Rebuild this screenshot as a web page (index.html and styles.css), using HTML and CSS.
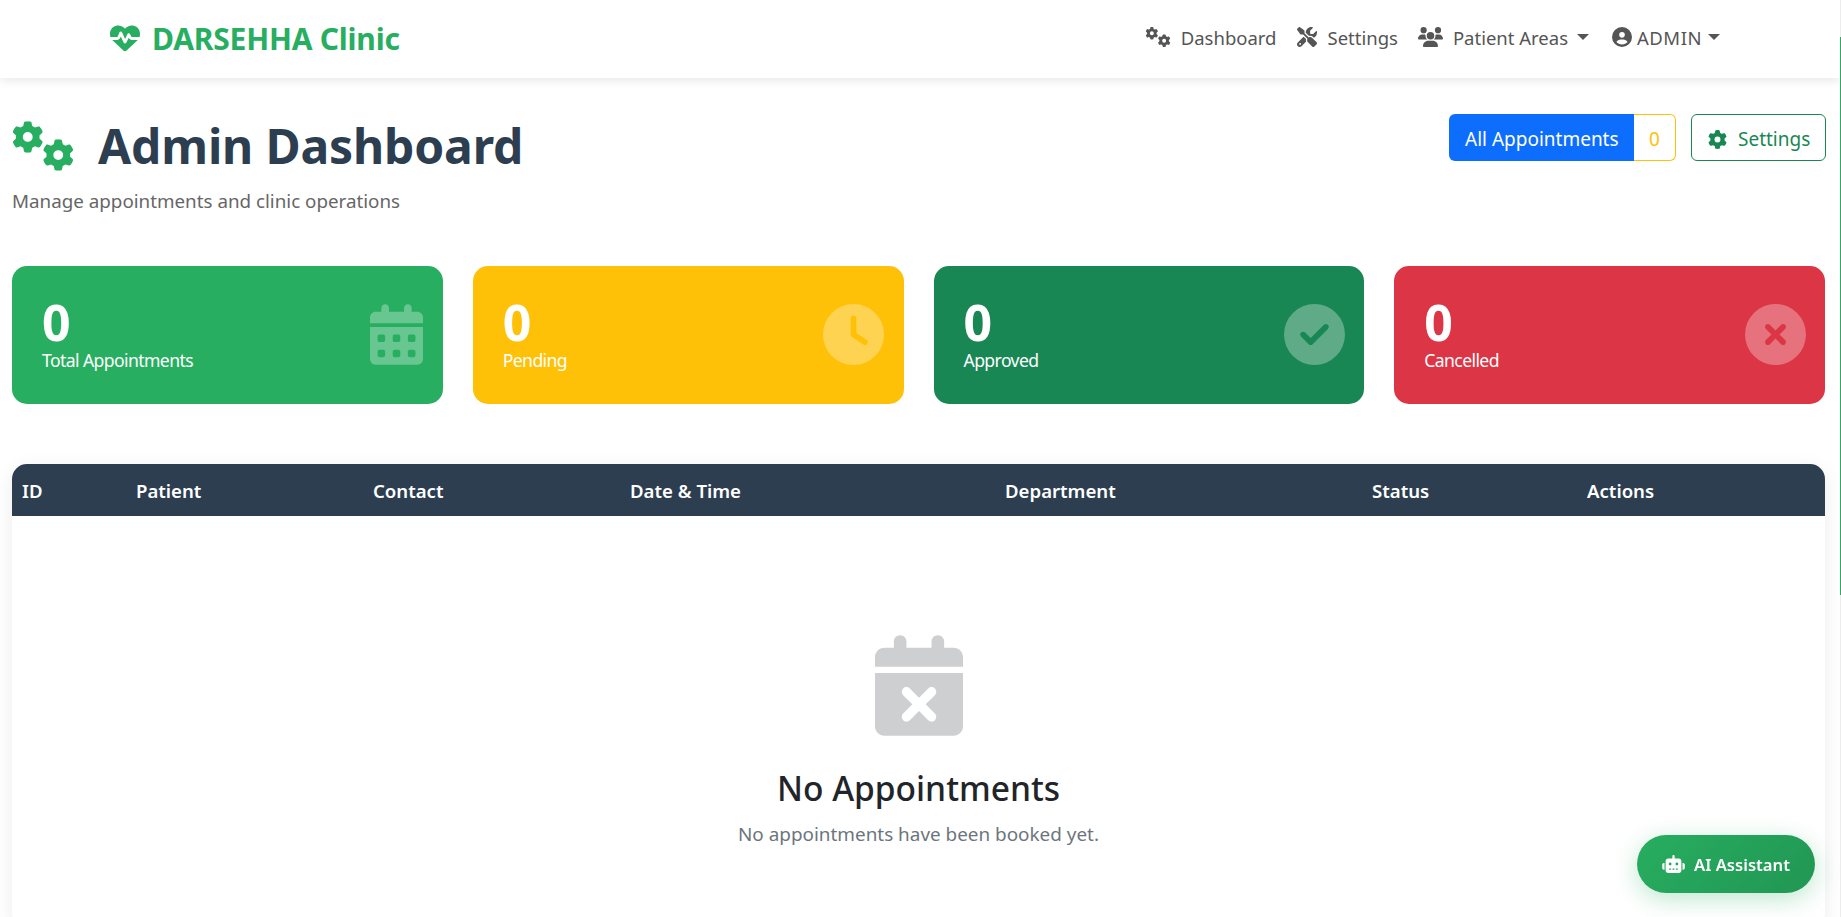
FILE: index.html
```html
<!DOCTYPE html>
<html lang="en">
<head>
  <meta charset="utf-8"/>
  <title>Admin Dashboard - DARSEHHA Clinic</title>
  <link rel="stylesheet" href="styles.css">
</head>
<body>
  <!-- icon sprite -->
  <svg class="sprite" aria-hidden="true">
    <symbol id="i-gear" viewBox="0 0 512 512"><path d="M495.9 166.6c3.2 8.7 .5 18.4-6.4 24.6l-43.3 39.4c1.1 8.3 1.7 16.8 1.7 25.4s-.6 17.1-1.7 25.4l43.3 39.4c6.9 6.2 9.6 15.9 6.4 24.6c-4.4 11.9-9.7 23.3-15.8 34.3l-4.7 8.1c-6.6 11-14 21.4-22.1 31.2c-5.9 7.2-15.7 9.6-24.5 6.8l-55.7-17.7c-13.4 10.3-28.2 18.9-44 25.4l-12.5 57.1c-2 9.1-9 16.3-18.2 17.8c-13.8 2.3-28 3.5-42.5 3.5s-28.7-1.2-42.5-3.5c-9.2-1.5-16.2-8.7-18.2-17.8l-12.5-57.1c-15.8-6.5-30.6-15.1-44-25.4L83.1 425.9c-8.8 2.8-18.6 .3-24.5-6.8c-8.1-9.8-15.5-20.2-22.1-31.2l-4.7-8.1c-6.1-11-11.4-22.4-15.8-34.3c-3.2-8.7-.5-18.4 6.4-24.6l43.3-39.4C64.6 273.1 64 264.6 64 256s.6-17.1 1.7-25.4L22.4 191.2c-6.9-6.2-9.6-15.9-6.4-24.6c4.4-11.9 9.7-23.3 15.8-34.3l4.7-8.1c6.6-11 14-21.4 22.1-31.2c5.9-7.2 15.7-9.6 24.5-6.8l55.7 17.7c13.4-10.3 28.2-18.9 44-25.4l12.5-57.1c2-9.1 9-16.3 18.2-17.8C227.3 1.2 241.5 0 256 0s28.7 1.2 42.5 3.5c9.2 1.5 16.2 8.7 18.2 17.8l12.5 57.1c15.8 6.5 30.6 15.1 44 25.4l55.7-17.7c8.8-2.8 18.6-.3 24.5 6.8c8.1 9.8 15.5 20.2 22.1 31.2l4.7 8.1c6.1 11 11.4 22.4 15.8 34.3zM256 336a80 80 0 1 0 0-160 80 80 0 1 0 0 160z"/></symbol>
    <symbol id="i-gears" viewBox="0 0 640 512">
      <use href="#i-gear" x="0" y="0" width="325" height="325"/>
      <use href="#i-gear" x="315" y="187" width="325" height="325"/>
    </symbol>
    <symbol id="i-heart" viewBox="0 0 512 512"><path d="M228.3 469.1L47.6 300.4c-4.2-3.9-8.2-8.1-11.9-12.4h87c22.6 0 43-13.6 51.7-34.5l10.5-25.2 49.3 109.5c3.8 8.5 12.1 14 21.4 14.1s17.8-5 22-13.3L320 253.7l1.7 3.4c9.5 19 28.9 31 50.1 31H476.3c-3.7 4.3-7.7 8.5-11.9 12.4L283.7 469.1c-7.5 7-17.4 10.9-27.7 10.9s-20.2-3.9-27.7-10.9zM503.7 240h-132c-3 0-5.8-1.7-7.2-4.4l-23.2-46.3c-4.1-8.1-12.4-13.3-21.5-13.3s-17.4 5.1-21.5 13.3l-41.4 82.8L205.9 158.2c-3.9-8.7-12.7-14.3-22.2-14.1s-18.1 5.9-21.8 14.8l-31.8 76.3c-1.2 3-4.2 4.9-7.4 4.9H16c-2.6 0-5 .4-7.3 1.1C3 225.2 0 208.2 0 190.9v-5.8c0-69.9 50.5-129.5 119.4-141C165 36.5 211.4 51.4 244 84l12 12 12-12c32.6-32.6 79-47.5 124.6-39.9C461.5 55.6 512 115.2 512 185.1v5.8c0 16.9-2.8 33.5-8.3 49.1z"/></symbol>
    <symbol id="i-tools" viewBox="0 0 512 512"><path d="M78.6 5C69.1-2.4 55.6-1.5 47 7L7 47c-8.5 8.5-9.4 22-2.1 31.6l80 104c4.5 5.9 11.6 9.4 19 9.4h54.1l109 109c-14.7 29-10 65.4 14.3 89.6l112 112c12.5 12.5 32.8 12.5 45.3 0l64-64c12.5-12.5 12.5-32.8 0-45.3l-112-112c-24.2-24.2-60.6-29-89.6-14.3l-109-109V104c0-7.5-3.5-14.5-9.4-19L78.6 5zM19.9 396.1C7.2 408.8 0 426.1 0 444.1C0 481.6 30.4 512 67.9 512c18 0 35.3-7.2 48-19.9L233.7 374.3c-7.8-20.9-9-43.6-3.6-65.1l-61.7-61.7L19.9 396.1zM512 144c0-10.5-1.1-20.7-3.2-30.5c-2.4-11.2-16.1-14.1-24.2-6l-63.9 63.9c-3 3-7.1 4.7-11.3 4.7H352c-8.8 0-16-7.2-16-16V102.6c0-4.2 1.7-8.3 4.7-11.3l63.9-63.9c8.1-8.1 5.2-21.8-6-24.2C388.7 1.1 378.5 0 368 0C288.5 0 224 64.5 224 144l0 .8 85.3 85.3c36-9.1 75.8 .5 104 28.7L429 274.5c49-23 83-72.8 83-130.5zM56 432a24 24 0 1 1 48 0 24 24 0 1 1 -48 0z"/></symbol>
    <symbol id="i-users" viewBox="0 0 640 512"><path d="M144 0a80 80 0 1 1 0 160A80 80 0 1 1 144 0zM512 0a80 80 0 1 1 0 160A80 80 0 1 1 512 0zM0 298.7C0 239.8 47.8 192 106.7 192h42.7c15.9 0 31 3.5 44.6 9.7c-1.3 7.2-1.9 14.7-1.9 22.3c0 38.2 16.8 72.5 43.3 96c-.2 0-.4 0-.7 0H21.3C9.6 320 0 310.4 0 298.7zM405.3 320c-.2 0-.4 0-.7 0c26.6-23.5 43.3-57.8 43.3-96c0-7.6-.7-15-1.9-22.3c13.6-6.3 28.7-9.7 44.6-9.7h42.7C592.2 192 640 239.8 640 298.7c0 11.8-9.6 21.3-21.3 21.3H405.3zM224 224a96 96 0 1 1 192 0 96 96 0 1 1 -192 0zM128 485.3C128 411.7 187.7 352 261.3 352H378.7C452.3 352 512 411.7 512 485.3c0 14.7-11.9 26.7-26.7 26.7H154.7c-14.7 0-26.7-11.9-26.7-26.7z"/></symbol>
    <symbol id="i-user" viewBox="0 0 512 512"><path d="M399 384.2C376.9 345.8 335.4 320 288 320H224c-47.4 0-88.9 25.8-111 64.2c35.2 39.2 86.2 63.8 143 63.8s107.8-24.7 143-63.8zM0 256a256 256 0 1 1 512 0A256 256 0 1 1 0 256zm256 16a72 72 0 1 0 0-144 72 72 0 1 0 0 144z"/></symbol>
    <symbol id="i-calendar" viewBox="0 0 448 512"><path d="M128 0c17.7 0 32 14.3 32 32V64H288V32c0-17.7 14.3-32 32-32s32 14.3 32 32V64h48c26.5 0 48 21.5 48 48v48H0V112C0 85.5 21.5 64 48 64H96V32c0-17.7 14.3-32 32-32zM0 192H448V464c0 26.5-21.5 48-48 48H48c-26.5 0-48-21.5-48-48V192zm64 80v32c0 8.8 7.2 16 16 16h32c8.8 0 16-7.2 16-16V272c0-8.8-7.2-16-16-16H80c-8.8 0-16 7.2-16 16zm128 0v32c0 8.8 7.2 16 16 16h32c8.8 0 16-7.2 16-16V272c0-8.8-7.2-16-16-16H208c-8.8 0-16 7.2-16 16zm144-16c-8.8 0-16 7.2-16 16v32c0 8.8 7.2 16 16 16h32c8.8 0 16-7.2 16-16V272c0-8.8-7.2-16-16-16H336zM64 400v32c0 8.8 7.2 16 16 16h32c8.8 0 16-7.2 16-16V400c0-8.8-7.2-16-16-16H80c-8.8 0-16 7.2-16 16zm144-16c-8.8 0-16 7.2-16 16v32c0 8.8 7.2 16 16 16h32c8.8 0 16-7.2 16-16V400c0-8.8-7.2-16-16-16H208zm112 16v32c0 8.8 7.2 16 16 16h32c8.8 0 16-7.2 16-16V400c0-8.8-7.2-16-16-16H336c-8.8 0-16 7.2-16 16z"/></symbol>
    <symbol id="i-clock" viewBox="0 0 512 512"><path d="M256 0a256 256 0 1 1 0 512A256 256 0 1 1 256 0zM232 120V256c0 8 4 15.5 10.7 20l96 64c11 7.4 25.9 4.4 33.3-6.7s4.4-25.9-6.7-33.3L280 243.2V120c0-13.3-10.7-24-24-24s-24 10.7-24 24z"/></symbol>
    <symbol id="i-check" viewBox="0 0 512 512"><path d="M256 512A256 256 0 1 0 256 0a256 256 0 1 0 0 512zM369 209L241 337c-9.4 9.4-24.6 9.4-33.9 0l-64-64c-9.4-9.4-9.4-24.6 0-33.9s24.6-9.4 33.9 0l47 47L335 175c9.4-9.4 24.6-9.4 33.9 0s9.4 24.6 0 33.9z"/></symbol>
    <symbol id="i-xmark" viewBox="0 0 512 512"><path d="M256 512A256 256 0 1 0 256 0a256 256 0 1 0 0 512zM175 175c9.4-9.4 24.6-9.4 33.9 0l47 47 47-47c9.4-9.4 24.6-9.4 33.9 0s9.4 24.6 0 33.9l-47 47 47 47c9.4 9.4 9.4 24.6 0 33.9s-24.6 9.4-33.9 0l-47-47-47 47c-9.4 9.4-24.6 9.4-33.9 0s-9.4-24.6 0-33.9l47-47-47-47c-9.4-9.4-9.4-24.6 0-33.9z"/></symbol>
    <symbol id="i-calendar-x" viewBox="0 0 448 512"><path d="M128 0c17.7 0 32 14.3 32 32V64H288V32c0-17.7 14.3-32 32-32s32 14.3 32 32V64h48c26.5 0 48 21.5 48 48v48H0V112C0 85.5 21.5 64 48 64H96V32c0-17.7 14.3-32 32-32zM0 192H448V464c0 26.5-21.5 48-48 48H48c-26.5 0-48-21.5-48-48V192zM305 305c9.4-9.4 9.4-24.6 0-33.9s-24.6-9.4-33.9 0l-47 47-47-47c-9.4-9.4-24.6-9.4-33.9 0s-9.4 24.6 0 33.9l47 47-47 47c-9.4 9.4-9.4 24.6 0 33.9s24.6 9.4 33.9 0l47-47 47 47c9.4 9.4 24.6 9.4 33.9 0s9.4-24.6 0-33.9l-47-47 47-47z"/></symbol>
    <symbol id="i-robot" viewBox="0 0 640 512"><path d="M320 0c17.7 0 32 14.3 32 32V96H472c39.8 0 72 32.2 72 72V440c0 39.8-32.2 72-72 72H168c-39.8 0-72-32.2-72-72V168c0-39.8 32.2-72 72-72H288V32c0-17.7 14.3-32 32-32zM208 384c-8.8 0-16 7.2-16 16s7.2 16 16 16h32c8.8 0 16-7.2 16-16s-7.2-16-16-16H208zm96 0c-8.8 0-16 7.2-16 16s7.2 16 16 16h32c8.8 0 16-7.2 16-16s-7.2-16-16-16H304zm96 0c-8.8 0-16 7.2-16 16s7.2 16 16 16h32c8.8 0 16-7.2 16-16s-7.2-16-16-16H400zM264 256a40 40 0 1 0 -80 0 40 40 0 1 0 80 0zm152 40a40 40 0 1 0 0-80 40 40 0 1 0 0 80zM48 224H64V416H48c-26.5 0-48-21.5-48-48V272c0-26.5 21.5-48 48-48zm544 0c26.5 0 48 21.5 48 48v96c0 26.5-21.5 48-48 48H576V224h16z"/></symbol>
  </svg>

  <!-- top navbar -->
  <nav class="navbar">
    <a class="brand" href="#">
      <svg class="brand-icon"><use href="#i-heart"/></svg>
      <span class="brand-name">DARSEHHA Clinic</span>
    </a>
    <ul class="nav-links">
      <li><a href="#"><svg class="nav-icon nav-icon-gears"><use href="#i-gears"/></svg>Dashboard</a></li>
      <li><a href="#"><svg class="nav-icon nav-icon-tools"><use href="#i-tools"/></svg>Settings</a></li>
      <li><a href="#"><svg class="nav-icon nav-icon-users"><use href="#i-users"/></svg>Patient Areas<i class="caret caret-wide"></i></a></li>
      <li class="nav-user"><a href="#"><svg class="nav-icon nav-icon-user"><use href="#i-user"/></svg>ADMIN<i class="caret"></i></a></li>
    </ul>
  </nav>

  <main class="page">
    <div class="page-head">
      <div>
        <h1 class="page-title"><svg class="title-icon"><use href="#i-gears"/></svg>Admin Dashboard</h1>
        <p class="page-sub">Manage appointments and clinic operations</p>
      </div>
      <div class="head-actions">
        <div class="btn-group">
          <a class="btn-all" href="#">All Appointments</a>
          <a class="btn-count" href="#">0</a>
        </div>
        <a class="btn-settings" href="#"><svg class="btn-icon"><use href="#i-gear"/></svg>Settings</a>
      </div>
    </div>

    <!-- stat cards -->
    <div class="stats">
      <div class="stat-card stat-total">
        <div><div class="stat-num">0</div><div class="stat-label">Total Appointments</div></div>
        <svg class="stat-icon stat-icon-cal"><use href="#i-calendar"/></svg>
      </div>
      <div class="stat-card stat-pending">
        <div><div class="stat-num">0</div><div class="stat-label">Pending</div></div>
        <svg class="stat-icon"><use href="#i-clock"/></svg>
      </div>
      <div class="stat-card stat-approved">
        <div><div class="stat-num">0</div><div class="stat-label">Approved</div></div>
        <svg class="stat-icon"><use href="#i-check"/></svg>
      </div>
      <div class="stat-card stat-cancelled">
        <div><div class="stat-num">0</div><div class="stat-label">Cancelled</div></div>
        <svg class="stat-icon"><use href="#i-xmark"/></svg>
      </div>
    </div>

    <!-- appointments table -->
    <div class="table-card">
      <table class="appt-table">
        <thead>
          <tr>
            <th class="col-id">ID</th>
            <th class="col-patient">Patient</th>
            <th class="col-contact">Contact</th>
            <th class="col-date">Date &amp; Time</th>
            <th class="col-dept">Department</th>
            <th class="col-status">Status</th>
            <th>Actions</th>
          </tr>
        </thead>
        <tbody>
          <tr>
            <td colspan="7">
              <div class="empty">
                <svg class="empty-icon"><use href="#i-calendar-x"/></svg>
                <h3>No Appointments</h3>
                <p>No appointments have been booked yet.</p>
              </div>
            </td>
          </tr>
        </tbody>
      </table>
    </div>
  </main>

  <a class="ai-btn" href="#"><svg class="ai-icon"><use href="#i-robot"/></svg>AI Assistant</a>

  <div class="scroll-track"><div class="scroll-thumb"></div></div>
</body>
</html>
```

FILE: styles.css
```css
html, body {
  height: 100%;
  overflow: hidden;
}
body {
  margin: 0;
  background: #fff;
  color: #212529;
  font-family: "Noto Sans", "Open Sans", sans-serif;
}
a {
  text-decoration: none;
  color: inherit;
}
svg {
  fill: currentColor;
  display: block;
  flex: none;
}
.sprite {
  width: 0;
  height: 0;
  position: absolute;
}

/* navbar */
.navbar {
  height: 78px;
  display: flex;
  align-items: center;
  justify-content: space-between;
  padding: 0 121px 0 110px;
  background: #fff;
  box-shadow: 0 2px 10px rgba(0, 0, 0, 0.1);
}
.brand {
  display: flex;
  align-items: center;
  gap: 12px;
  color: #27ae60;
  font-size: 30px;
  font-weight: 700;
  letter-spacing: -0.2px;
}
.brand-icon {
  width: 30px;
  height: 30px;
  margin-top: -3px;
}
.brand-name {
  margin-top: -2px;
}
.nav-links {
  display: flex;
  align-items: center;
  gap: 20px;
  margin: -3px 0 0;
  padding: 0;
  list-style: none;
  color: #555;
  font-size: 18.5px;
}
.nav-links a {
  display: flex;
  align-items: center;
}
.nav-user {
  margin-left: 3px;
  letter-spacing: 0.5px;
}
.nav-icon {
  height: 20px;
  margin-top: -1px;
}
.nav-icon-gears {
  width: 26px;
  margin-right: 10px;
}
.nav-icon-tools {
  width: 22px;
  margin-right: 9px;
}
.nav-icon-users {
  width: 25px;
  margin-right: 10px;
}
.nav-icon-user {
  width: 20px;
  margin-right: 5px;
}
.caret {
  display: inline-block;
  margin-left: 6px;
  margin-top: -2px;
  border-top: 6px solid currentColor;
  border-left: 6px solid transparent;
  border-right: 6px solid transparent;
}
.caret-wide {
  margin-left: 9px;
}

/* page */
.page {
  padding: 36px 16px 0 12px;
}
.page-head {
  display: flex;
  justify-content: space-between;
  align-items: flex-start;
}
.page-title {
  display: flex;
  align-items: center;
  gap: 24px;
  margin: 3px 0 0;
  color: #2c3e50;
  font-size: 48px;
  font-weight: 700;
  line-height: 58px;
  letter-spacing: -0.15px;
}
.title-icon {
  width: 62px;
  height: 50px;
  color: #27ae60;
}
.page-sub {
  margin: 13px 0 0;
  color: #666;
  font-size: 18.8px;
  line-height: 26px;
}
.head-actions {
  display: flex;
  gap: 15px;
  margin-right: -1px;
}
.btn-group {
  display: flex;
  height: 47px;
  font-size: 19px;
}
.btn-all {
  display: flex;
  align-items: center;
  padding: 2px 0 0 16px;
  width: 185px;
  box-sizing: border-box;
  background: #0d6efd;
  color: #fff;
  white-space: nowrap;
  border-radius: 6px 0 0 6px;
}
.btn-count {
  display: flex;
  align-items: center;
  justify-content: center;
  width: 42px;
  padding-top: 2px;
  box-sizing: border-box;
  border: 1px solid #ffc107;
  border-left: 0;
  border-radius: 0 6px 6px 0;
  color: #ffc107;
}
.btn-settings {
  display: flex;
  align-items: center;
  gap: 11px;
  height: 47px;
  box-sizing: border-box;
  width: 135px;
  padding: 3px 0 0 16px;
  border: 1px solid #198754;
  border-radius: 6px;
  color: #198754;
  font-size: 19px;
}
.btn-icon {
  width: 19px;
  height: 19px;
}

/* stat cards */
.stats {
  display: grid;
  grid-template-columns: repeat(4, 1fr);
  gap: 30px;
  margin-top: 52px;
}
.stat-card {
  height: 138px;
  box-sizing: border-box;
  padding: 0 20px 0 30px;
  border-radius: 15px;
  display: flex;
  align-items: center;
  justify-content: space-between;
  color: #fff;
}
.stat-total { background: #27ae60; }
.stat-pending { background: #ffc107; }
.stat-approved { background: #198754; padding-right: 19px; }
.stat-cancelled { background: #dc3545; padding-right: 19px; }
.stat-num {
  font-size: 50px;
  font-weight: 700;
  line-height: 50px;
}
.stat-label {
  font-size: 17.6px;
  line-height: 26px;
  letter-spacing: -0.6px;
}
.stat-icon {
  width: 61px;
  height: 61px;
  margin-top: -2px;
  opacity: 0.3;
}
.stat-icon-cal {
  width: 53px;
}

/* table */
.table-card {
  margin-top: 60px;
  background: #fff;
  border-radius: 15px;
  box-shadow: 0 5px 20px rgba(0, 0, 0, 0.08);
  overflow: hidden;
}
.appt-table {
  width: 100%;
  border-collapse: collapse;
  table-layout: fixed;
}
.appt-table th {
  box-sizing: border-box;
  height: 52px;
  padding: 0 10px;
  background: #2c3e50;
  color: #fff;
  font-size: 18.6px;
  font-weight: 600;
  text-align: left;
}
.col-id { width: 114px; }
.col-patient { width: 237px; }
.col-contact { width: 257px; }
.col-date { width: 375px; }
.col-dept { width: 367px; }
.col-status { width: 215px; }
.appt-table td {
  padding: 0;
}
.empty {
  padding: 119px 0 80px;
  text-align: center;
}
.empty-icon {
  width: 88px;
  height: 101px;
  margin: 0 auto;
  color: #cdcfd1;
}
.empty h3 {
  margin: 32px 0 0;
  font-size: 33.5px;
  font-weight: 500;
  line-height: 40px;
}
.empty p {
  margin: 13px 0 0;
  color: #6c757d;
  font-size: 18.9px;
  line-height: 26px;
}

/* floating button */
.ai-btn {
  position: fixed;
  right: 26px;
  bottom: 24px;
  height: 58px;
  width: 178px;
  box-sizing: border-box;
  display: flex;
  align-items: center;
  justify-content: center;
  gap: 9px;
  border-radius: 29px;
  background: linear-gradient(135deg, #27ae60, #219653);
  box-shadow: 0 6px 25px rgba(39, 174, 96, 0.3);
  color: #fff;
  font-size: 16.6px;
  font-weight: 600;
}
.ai-icon {
  width: 23px;
  height: 18px;
}

/* thin scrollbar at the right edge */
.scroll-track {
  position: fixed;
  top: 0;
  right: 0;
  bottom: 0;
  width: 1px;
  background: #ececec;
}
.scroll-thumb {
  position: absolute;
  top: 37px;
  left: 0;
  width: 1px;
  height: 558px;
  background: #27ae60;
}
```
